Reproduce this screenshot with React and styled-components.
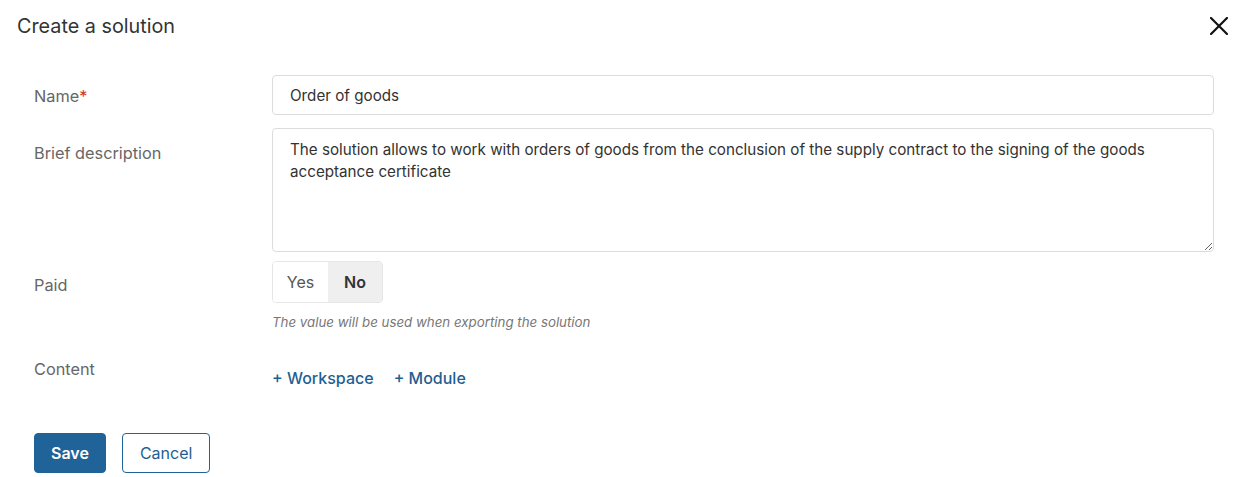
import React from 'react';
import styled, { createGlobalStyle } from 'styled-components';

const GlobalStyle = createGlobalStyle`
  body {
    margin: 0;
    background: #fff;
    font-family: Inter, "Noto Sans", sans-serif;
    color: #333;
  }
`;

const Dialog = styled.div`
  width: 1246px;
  height: 477px;
  box-sizing: border-box;
  overflow: hidden;
`;

const Header = styled.div`
  height: 52px;
  padding: 0 17px 0 17px;
  display: flex;
  align-items: center;
  justify-content: space-between;
`;

const Title = styled.h1`
  margin: 0;
  font-size: 19.8px;
  font-weight: 400;
  color: #333;
`;

const CloseButton = styled.button`
  border: none;
  background: none;
  padding: 0;
  width: 20px;
  height: 20px;
  display: flex;
  align-items: center;
  justify-content: center;
  cursor: pointer;
`;

const Form = styled.div`
  padding: 23px 32px 0 34px;
  display: flex;
  flex-direction: column;
`;

const Row = styled.div`
  display: grid;
  grid-template-columns: 238px 1fr;
  margin-top: ${p => p.$gap || 0}px;
`;

const Label = styled.div`
  font-size: 16.3px;
  line-height: 22px;
  color: #666;
  padding-top: ${p => p.$top || 0}px;
`;

const Required = styled.span`
  color: #d9302c;
`;

const TextInput = styled.input`
  box-sizing: border-box;
  width: 100%;
  height: 40px;
  padding: 0 17px;
  border: 1px solid #dcdcdc;
  border-radius: 4px;
  font-family: inherit;
  font-size: 15.2px;
  color: #333;
  outline: none;
`;

const TextArea = styled.textarea`
  box-sizing: border-box;
  width: 100%;
  height: 124px;
  padding: 10px 17px 8px;
  border: 1px solid #dcdcdc;
  border-radius: 4px;
  font-family: inherit;
  font-size: 15.2px;
  line-height: 22px;
  color: #333;
  resize: vertical;
  outline: none;
  display: block;
`;

const Toggle = styled.div`
  display: inline-flex;
  height: 42px;
  box-sizing: border-box;
  border: 1px solid #e6e6e6;
  border-radius: 4px;
  overflow: hidden;
`;

const ToggleOption = styled.div`
  width: ${p => p.$width}px;
  display: flex;
  align-items: center;
  justify-content: center;
  font-size: 16px;
  background: ${p => (p.$active ? '#efefef' : '#fff')};
  color: ${p => (p.$active ? '#333' : '#555')};
  font-weight: ${p => (p.$active ? 600 : 400)};
`;

const Hint = styled.div`
  margin-top: 10px;
  font-size: 13.3px;
  line-height: 18px;
  font-style: italic;
  color: #777;
`;

const Links = styled.div`
  display: flex;
  gap: 20px;
  padding-top: 9px;
`;

const AddLink = styled.a`
  font-size: 16px;
  line-height: 22px;
  font-weight: 500;
  color: #1f5f91;
  text-decoration: none;
  cursor: pointer;
`;

const Actions = styled.div`
  display: flex;
  gap: 16px;
  margin-top: 44px;
`;

const Button = styled.button`
  height: 40px;
  box-sizing: border-box;
  padding: 0 ${p => (p.$primary ? 16 : 17)}px;
  border-radius: 4px;
  border: 1px solid #1f6399;
  background: ${p => (p.$primary ? '#1f6399' : '#fff')};
  color: ${p => (p.$primary ? '#fff' : '#1f5f91')};
  font-family: inherit;
  font-size: 16px;
  font-weight: ${p => (p.$primary ? 600 : 400)};
  cursor: pointer;
`;

const App = () => {
  return (
    <Dialog>
      <GlobalStyle />
      <Header>
        <Title>Create a solution</Title>
        <CloseButton aria-label="Close">
          <svg width="18" height="18" viewBox="0 0 18 18">
            <path d="M1 1 L17 17 M17 1 L1 17" stroke="#111" strokeWidth="2.2" strokeLinecap="square" />
          </svg>
        </CloseButton>
      </Header>
      <Form>
        <Row>
          <Label $top={10}>
            Name<Required>*</Required>
          </Label>
          <TextInput defaultValue="Order of goods" />
        </Row>
        <Row $gap={13}>
          <Label $top={14}>Brief description</Label>
          <TextArea defaultValue="The solution allows to work with orders of goods from the conclusion of the supply contract to the signing of the goods acceptance certificate" />
        </Row>
        <Row $gap={9}>
          <Label $top={13}>Paid</Label>
          <div>
            <Toggle>
              <ToggleOption $width={55}>Yes</ToggleOption>
              <ToggleOption $width={54} $active>No</ToggleOption>
            </Toggle>
            <Hint>The value will be used when exporting the solution</Hint>
          </div>
        </Row>
        <Row $gap={27}>
          <Label>Content</Label>
          <Links>
            <AddLink>+ Workspace</AddLink>
            <AddLink>+ Module</AddLink>
          </Links>
        </Row>
        <Actions>
          <Button $primary>Save</Button>
          <Button>Cancel</Button>
        </Actions>
      </Form>
    </Dialog>
  );
};

export default App;
